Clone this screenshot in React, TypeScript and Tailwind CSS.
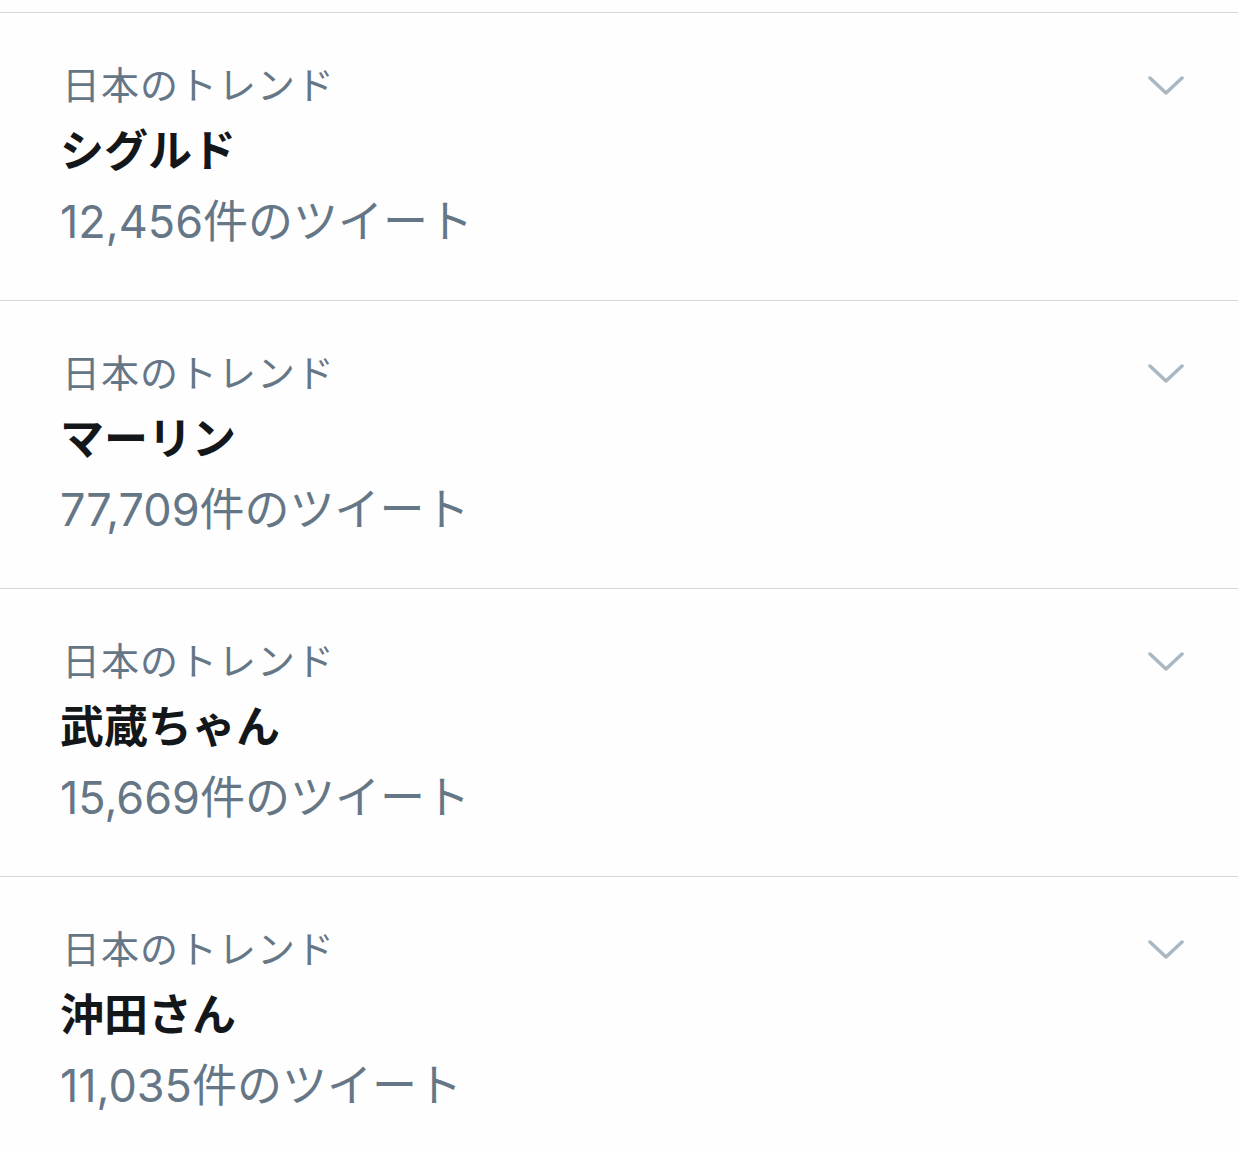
import React from 'react';

interface Trend {
  name: string;
  count: string;
}

const trends: Trend[] = [
  { name: 'シグルド', count: '12,456' },
  { name: 'マーリン', count: '77,709' },
  { name: '武蔵ちゃん', count: '15,669' },
  { name: '沖田さん', count: '11,035' },
];

const font = { fontFamily: '"Inter", "Noto Sans CJK JP", sans-serif' };

const Chevron = () => (
  <svg width="36" height="20" viewBox="0 0 36 20" fill="none" stroke="#aab8c2" strokeWidth="3.5" strokeLinecap="round" strokeLinejoin="round">
    <path d="M2 2 L18 17 L34 2" />
  </svg>
);

const TrendRow: React.FC<{ trend: Trend }> = ({ trend }) => (
  <div className="h-[288px] border-t border-[#d6d6d6] flex justify-between pl-[60px] pr-[54px] pt-[48px]">
    <div className="flex flex-col">
      <div className="text-[38px] leading-[48px] text-[#657786] tracking-[1px] pl-[2px]">日本のトレンド</div>
      <div className="mt-[14px] text-[44px] leading-[56px] font-bold text-[#14171a]">{trend.name}</div>
      <div className="mt-[13px] text-[45px] leading-[60px] text-[#657786]">{trend.count}件のツイート</div>
    </div>
    <div className="pt-[15px]">
      <Chevron />
    </div>
  </div>
);

export default function App() {
  return (
    <div className="w-[1238px] h-[1151px] overflow-hidden bg-[#fefefe] pt-[12px]" style={font}>
      {trends.map(t => (
        <TrendRow key={t.name} trend={t} />
      ))}
    </div>
  );
}
